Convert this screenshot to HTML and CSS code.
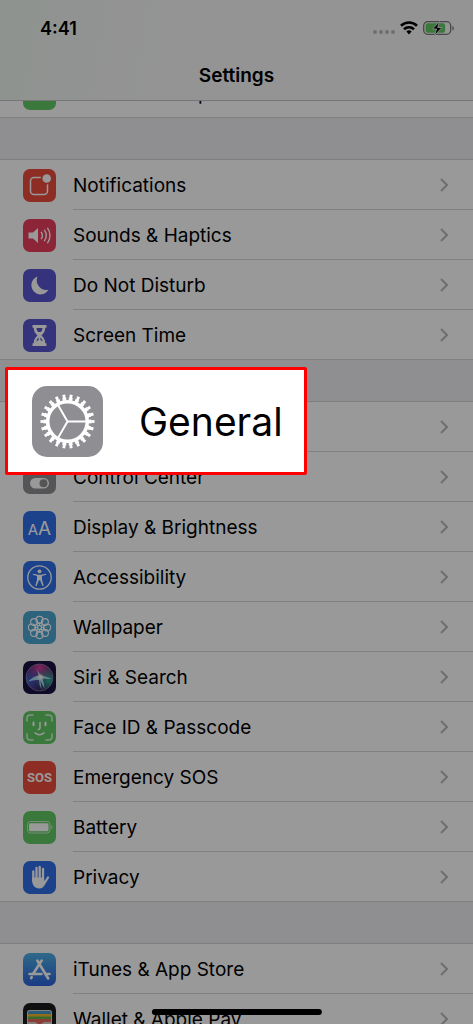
FILE: index.html
```html
<!DOCTYPE html>
<html lang="en">

<head>
    <meta charset="utf-8">
    <meta name="viewport" content="width=device-width, initial-scale=1">
    <title>Settings</title>
    <link rel="stylesheet" href="styles.css">
</head>

<body>
    <div class="screen">
        <header class="header">
            <div class="status">
                <span class="time">4:41</span>
                <div class="indicators">
                    <svg class="dots" width="22" height="16" viewBox="0 0 22 16">
                        <circle cx="2" cy="12" r="2" />
                        <circle cx="8" cy="12" r="2" />
                        <circle cx="14" cy="12" r="2" />
                        <circle cx="20" cy="12" r="2" />
                    </svg>
                    <svg width="18" height="16" viewBox="0 0 18 16" fill="none" stroke="#000" stroke-width="2.6">
                        <path d="M1 5.800a11.400 11.400 0 0 1 16 0" />
                        <path d="M4 9.200a7.200 7.200 0 0 1 10 0" />
                        <path d="M6.400 11.600a3.700 3.700 0 0 1 5.200 0L9 14.400z" fill="#000" stroke="none" />
                    </svg>
                    <svg width="31" height="16" viewBox="0 0 31 16">
                        <rect x="0.700" y="1.700" width="27" height="12.600" rx="4" fill="none" stroke="#777" stroke-width="1.300" />
                        <path d="M29.500 6v4.500c1.600-.6 1.600-3.900 0-4.500z" fill="#666" />
                        <rect class="green" x="2.600" y="3.200" width="19.500" height="9.600" rx="2" />
                        <path d="M16.500 1.500L9.500 9h4l-2 6.500 7.500-8h-4.300z" fill="#000" stroke="#ddd" stroke-width="1" />
                    </svg>
                </div>
            </div>
            <h1>Settings</h1>
        </header>

        <main class="settings">
            <nav class="group group-scrolled">
                <a class="row" href="#">
                    <svg class="icon" viewBox="0 0 33 33">
                        <rect class="green" width="33" height="33" rx="7" />
                        <g fill="none" stroke="#fff" stroke-width="2">
                            <circle cx="12" cy="16.500" r="6" />
                            <circle cx="21" cy="16.500" r="6" />
                        </g>
                    </svg>
                    <span class="label">Personal Hotspot</span>
                </a>
            </nav>

            <nav class="group">
                <a class="row" href="#">
                    <svg class="icon" viewBox="0 0 33 33">
                        <rect class="red" width="33" height="33" rx="7" />
                        <rect x="7.500" y="8.500" width="17" height="17" rx="3.500" fill="none" stroke="#fff" stroke-width="1.500" />
                        <circle class="red" cx="23.700" cy="9.500" r="6" />
                        <circle cx="23.700" cy="9.500" r="4.300" fill="#fff" />
                    </svg>
                    <span class="label">Notifications</span>
                    <svg class="chevron" viewBox="0 0 9 14"><path d="M1 1l6 6-6 6" /></svg>
                </a>
                <a class="row" href="#">
                    <svg class="icon" viewBox="0 0 33 33">
                        <rect class="pink" width="33" height="33" rx="7" />
                        <path d="M5.500 13.500h4.500L15 9v15l-5-4.500H5.500z" fill="#fff" />
                        <g fill="none" stroke="#fff" stroke-width="1.400" stroke-linecap="round">
                            <path d="M18.300 13.300a5.500 5.500 0 0 1 0 6.400" />
                            <path d="M21.400 11.200a9 9 0 0 1 0 10.600" />
                            <path d="M24.600 9.200a12.500 12.500 0 0 1 0 14.600" />
                        </g>
                    </svg>
                    <span class="label">Sounds &amp; Haptics</span>
                    <svg class="chevron" viewBox="0 0 9 14"><path d="M1 1l6 6-6 6" /></svg>
                </a>
                <a class="row" href="#">
                    <svg class="icon" viewBox="0 0 33 33">
                        <rect class="purple" width="33" height="33" rx="7" />
                        <path d="M14.500 7.500a9.200 9.200 0 1 0 11 13.300A9.800 9.800 0 0 1 14.500 7.500z" fill="#fff" />
                    </svg>
                    <span class="label">Do Not Disturb</span>
                    <svg class="chevron" viewBox="0 0 9 14"><path d="M1 1l6 6-6 6" /></svg>
                </a>
                <a class="row" href="#">
                    <svg class="icon" viewBox="0 0 33 33">
                        <rect class="purple" width="33" height="33" rx="7" />
                        <path d="M9.500 6h14v2.800h-1.300c0 4-1.700 5.500-3.700 7.700 2 2.200 3.700 3.700 3.700 7.700h1.300V27h-14v-2.800h1.300c0-4 1.700-5.500 3.700-7.700-2-2.200-3.700-3.700-3.700-7.700H9.500z" fill="#fff" />
                        <path class="purple" d="M13.500 9h6c0 2-.7 3-1.800 4h-2.400c-1.100-1-1.800-2-1.800-4zM15.600 18.500q-2 1.500-2.300 4l2.300-1.500zM17.400 18.500q2 1.500 2.300 4L17.400 21z" />
                    </svg>
                    <span class="label">Screen Time</span>
                    <svg class="chevron" viewBox="0 0 9 14"><path d="M1 1l6 6-6 6" /></svg>
                </a>
            </nav>

            <nav class="group">
                <a class="row" href="#">
                    <svg class="icon" viewBox="0 0 71 71"><use href="#gear" /></svg>
                    <span class="label">General</span>
                    <svg class="chevron" viewBox="0 0 9 14"><path d="M1 1l6 6-6 6" /></svg>
                </a>
                <a class="row" href="#">
                    <svg class="icon" viewBox="0 0 33 33">
                        <rect class="gray" width="33" height="33" rx="7" />
                        <rect x="7.500" y="5" width="18" height="8" rx="4" fill="none" stroke="#fff" stroke-width="1.500" />
                        <circle cx="11.500" cy="9" r="3" fill="#fff" />
                        <rect x="7" y="17" width="19" height="10.500" rx="5.250" fill="#fff" />
                        <circle class="gray" cx="20.500" cy="22.200" r="4" />
                    </svg>
                    <span class="label">Control Center</span>
                    <svg class="chevron" viewBox="0 0 9 14"><path d="M1 1l6 6-6 6" /></svg>
                </a>
                <a class="row" href="#">
                    <svg class="icon" viewBox="0 0 33 33">
                        <rect class="blue" width="33" height="33" rx="7" />
                        <text class="letter" x="10" y="24" font-size="15">A</text>
                        <text class="letter" x="21.500" y="24" font-size="19">A</text>
                    </svg>
                    <span class="label">Display &amp; Brightness</span>
                    <svg class="chevron" viewBox="0 0 9 14"><path d="M1 1l6 6-6 6" /></svg>
                </a>
                <a class="row" href="#">
                    <svg class="icon" viewBox="0 0 33 33">
                        <rect class="blue" width="33" height="33" rx="7" />
                        <circle cx="16.500" cy="16.500" r="11.700" fill="none" stroke="#fff" stroke-width="1.300" />
                        <circle cx="16.500" cy="10.300" r="1.900" fill="#fff" />
                        <path d="M10 12.700l5 1h3l5-1 .2 1.100-4.200 1.300v3.600l1.700 6-1.300.4-2.300-5.900h-1.200l-2.300 5.900-1.300-.4 1.700-6v-3.600l-4.200-1.300z" fill="#fff" />
                    </svg>
                    <span class="label">Accessibility</span>
                    <svg class="chevron" viewBox="0 0 9 14"><path d="M1 1l6 6-6 6" /></svg>
                </a>
                <a class="row" href="#">
                    <svg class="icon" viewBox="0 0 33 33">
                        <rect class="sky" width="33" height="33" rx="7" />
                        <g fill="none" stroke="#fff" stroke-width="1.100">
                            <circle cx="16.500" cy="8.900" r="3.500" />
                            <circle cx="21.900" cy="11.100" r="3.500" />
                            <circle cx="24.100" cy="16.500" r="3.500" />
                            <circle cx="21.900" cy="21.900" r="3.500" />
                            <circle cx="16.500" cy="24.100" r="3.500" />
                            <circle cx="11.100" cy="21.900" r="3.500" />
                            <circle cx="8.900" cy="16.500" r="3.500" />
                            <circle cx="11.100" cy="11.100" r="3.500" />
                            <circle cx="16.500" cy="16.500" r="4.600" />
                            <circle cx="16.500" cy="16.500" r="2" />
                            <path d="M16.500 12v3M16.500 18v3M12 16.500h3M18 16.500h3M13.300 13.300l2 2M17.700 17.700l2 2M19.700 13.300l-2 2M15.300 17.700l-2 2" />
                        </g>
                    </svg>
                    <span class="label">Wallpaper</span>
                    <svg class="chevron" viewBox="0 0 9 14"><path d="M1 1l6 6-6 6" /></svg>
                </a>
                <a class="row" href="#">
                    <svg class="icon" viewBox="0 0 33 33">
                        <defs>
                            <radialGradient id="siri-pink" cx=".5" cy=".15" r=".6">
                                <stop offset="0" stop-color="#d0409c" />
                                <stop offset="1" stop-color="#d0409c" stop-opacity="0" />
                            </radialGradient>
                            <radialGradient id="siri-blue" cx=".1" cy=".6" r=".55">
                                <stop offset="0" stop-color="#4560c8" />
                                <stop offset="1" stop-color="#4560c8" stop-opacity="0" />
                            </radialGradient>
                            <radialGradient id="siri-teal" cx=".85" cy=".6" r=".5">
                                <stop offset="0" stop-color="#2fa898" />
                                <stop offset="1" stop-color="#2fa898" stop-opacity="0" />
                            </radialGradient>
                            <radialGradient id="siri-glow">
                                <stop offset="0" stop-color="#fff" />
                                <stop offset="1" stop-color="#fff" stop-opacity="0" />
                            </radialGradient>
                        </defs>
                        <rect width="33" height="33" rx="7" fill="#1a1240" />
                        <circle cx="16.500" cy="16.500" r="13.500" fill="#3a1d58" />
                        <circle cx="16.500" cy="16.500" r="13.500" fill="url(#siri-pink)" />
                        <circle cx="16.500" cy="16.500" r="13.500" fill="url(#siri-blue)" />
                        <circle cx="16.500" cy="16.500" r="13.500" fill="url(#siri-teal)" stroke="#8c86a8" stroke-width=".7" />
                        <path d="M5 20.500Q12 14 16 14.500L13.500 8l4.500 6.500Q23 15 29 18q-6-.5-9.500-.5 1.500 4 2 10-2.500-4-4-8l1 9q-2.500-4-2.500-9.500Q11 18.500 5 20.500z" fill="#b4ecf2" opacity=".85" />
                        <circle cx="17.500" cy="16" r="4" fill="url(#siri-glow)" />
                    </svg>
                    <span class="label">Siri &amp; Search</span>
                    <svg class="chevron" viewBox="0 0 9 14"><path d="M1 1l6 6-6 6" /></svg>
                </a>
                <a class="row" href="#">
                    <svg class="icon" viewBox="0 0 33 33">
                        <rect class="green" width="33" height="33" rx="7" />
                        <g fill="none" stroke="#fff" stroke-width="1.500" stroke-linecap="round">
                            <path d="M4 10V7.500Q4 4 7.500 4H10M23 4h2.500Q29 4 29 7.500V10M29 23v2.500q0 3.500-3.500 3.500H23M10 29H7.500Q4 29 4 25.500V23" opacity=".8" />
                            <path d="M10.500 11.500v2.800M22.500 11.500v2.800" stroke-width="2" />
                            <path d="M17 11.500v5.500q0 1.500-1.800 1.500M12 21.800q4.500 4 9 0" />
                        </g>
                    </svg>
                    <span class="label">Face ID &amp; Passcode</span>
                    <svg class="chevron" viewBox="0 0 9 14"><path d="M1 1l6 6-6 6" /></svg>
                </a>
                <a class="row" href="#">
                    <svg class="icon" viewBox="0 0 33 33">
                        <rect class="red" width="33" height="33" rx="7" />
                        <text class="sos" x="16.500" y="21">SOS</text>
                    </svg>
                    <span class="label">Emergency SOS</span>
                    <svg class="chevron" viewBox="0 0 9 14"><path d="M1 1l6 6-6 6" /></svg>
                </a>
                <a class="row" href="#">
                    <svg class="icon" viewBox="0 0 33 33">
                        <rect class="green" width="33" height="33" rx="7" />
                        <rect x="4.500" y="10.500" width="22.500" height="11.500" rx="3" fill="none" stroke="#fff" stroke-width="1" opacity=".65" />
                        <rect x="6" y="12.300" width="19.500" height="8" rx="1.500" fill="#fff" />
                        <path d="M28.500 14.300v4c1.500-.5 1.500-3.500 0-4z" fill="#fff" opacity=".7" />
                    </svg>
                    <span class="label">Battery</span>
                    <svg class="chevron" viewBox="0 0 9 14"><path d="M1 1l6 6-6 6" /></svg>
                </a>
                <a class="row" href="#">
                    <svg class="icon" viewBox="0 0 33 33">
                        <rect class="blue" width="33" height="33" rx="7" />
                        <g fill="none" stroke="#fff" stroke-width="2.300" stroke-linecap="round">
                            <path d="M10.300 10.500V20M13.500 6.800V18M16.700 6V18M20 8V18" />
                            <path d="M25 16.500L21 23" />
                        </g>
                        <path d="M9.150 16.500h12v3l1.700.3c-.8 2.800-1.600 7.700-6.400 7.700-5.200 0-7.300-4.200-7.300-8z" fill="#fff" />
                    </svg>
                    <span class="label">Privacy</span>
                    <svg class="chevron" viewBox="0 0 9 14"><path d="M1 1l6 6-6 6" /></svg>
                </a>
            </nav>

            <nav class="group">
                <a class="row" href="#">
                    <svg class="icon" viewBox="0 0 33 33">
                        <defs>
                            <linearGradient id="store" x2="0" y2="1">
                                <stop offset="0" stop-color="#4fb0e4" />
                                <stop offset="1" stop-color="#2b62dc" />
                            </linearGradient>
                        </defs>
                        <rect width="33" height="33" rx="7" fill="url(#store)" />
                        <g fill="none" stroke="#fff" stroke-width="2.600" stroke-linecap="round">
                            <path d="M14.300 7.500l10.900 18M18.700 7.500L10 21M8.700 24.200l-.5 1" />
                            <path d="M6.500 21h12M22.500 21h4" />
                        </g>
                    </svg>
                    <span class="label">iTunes &amp; App Store</span>
                    <svg class="chevron" viewBox="0 0 9 14"><path d="M1 1l6 6-6 6" /></svg>
                </a>
                <a class="row" href="#">
                    <svg class="icon" viewBox="0 0 33 33">
                        <rect width="33" height="33" rx="7" fill="#1c1c1e" />
                        <rect x="4" y="7" width="25" height="22" rx="2.500" fill="#d8d5cc" />
                        <path d="M5 11V9.500Q5 8 6.500 8h20Q28 8 28 9.500V11z" fill="#4399c8" />
                        <path d="M5 11h23v3H5z" fill="#f2b62e" />
                        <path d="M5 13.500h23v3H5z" fill="#62b34c" />
                        <path d="M5 16h23v3h-6.500q-1.500 0-2 1-3 2.700-6 0-.5-1-2-1H5z" fill="#e8685c" />
                    </svg>
                    <span class="label">Wallet &amp; Apple Pay</span>
                    <svg class="chevron" viewBox="0 0 9 14"><path d="M1 1l6 6-6 6" /></svg>
                </a>
            </nav>
        </main>

        <div class="dim"></div>

        <a class="callout" href="#">
            <svg class="callout-icon" viewBox="0 0 71 71">
                <g id="gear">
                    <rect class="gray" width="71" height="71" rx="15" />
                    <g fill="none" stroke="#fff">
                        <circle cx="35.500" cy="35.500" r="19.800" stroke-width="3.600" />
                        <!-- 22 teeth, wide at the root and narrow at the tip -->
                        <circle cx="35.500" cy="35.500" r="22.500" stroke-width="3" pathLength="220" stroke-dasharray="6 4" stroke-dashoffset="3" />
                        <circle cx="35.500" cy="35.500" r="25.300" stroke-width="3.400" pathLength="220" stroke-dasharray="4 6" stroke-dashoffset="2" />
                        <path d="M35.500 35.500h19M35.500 35.500L26 19M35.500 35.500L26 52" stroke-width="2" />
                    </g>
                </g>
            </svg>
            <span>General</span>
        </a>

        <div class="home-bar"></div>
    </div>
</body>

</html>
```
FILE: styles.css
```css
* {
    box-sizing: border-box;
}

body {
    margin: 0;
    background-color: #efeff4;
    font-family: Inter, "Liberation Sans", sans-serif;
    color: #000;
}

.screen {
    position: relative;
    height: 100vh;
    overflow: hidden;
}

.header {
    height: 101px;
    padding-top: 18px;
    border-bottom: 1px solid #c4c4c8;
    background: linear-gradient(100deg, #eef5f0 0%, #f7f7f7 45%);
}

.status {
    display: flex;
    justify-content: space-between;
    align-items: center;
    height: 20px;
    padding: 0 19px 0 40px;
}

.time {
    font-size: 18px;
    font-weight: 600;
}

.indicators {
    display: flex;
    align-items: center;
    gap: 5px;
}

.dots {
    fill: #bbb;
}

h1 {
    margin: 26px 0 0;
    font-size: 19px;
    line-height: 24px;
    font-weight: 600;
    text-align: center;
}

.settings {
    display: flex;
    flex-direction: column;
    gap: 41px;
}

.group {
    display: flex;
    flex-direction: column;
    border-top: 1px solid #d2d2d7;
    background-color: #fff;
}

/* last row of the list that has scrolled under the header */
.group-scrolled {
    height: 17px;
    justify-content: flex-end;
    border-top: none;
    overflow: hidden;
}

.row {
    display: flex;
    flex: none;
    align-items: center;
    height: 50px;
    padding: 0 24px 0 23px;
    color: inherit;
    text-decoration: none;
    background: linear-gradient(#d6d6da, #d6d6da) 73px 100% / 100% 1px no-repeat;
}

.row:last-child {
    background-position: 0 100%;
}

.icon {
    width: 33px;
    height: 33px;
    margin-right: 17px;
}

.label {
    flex: 1;
    font-size: 19px;
}

.chevron {
    width: 9px;
    height: 14px;
    fill: none;
    stroke: #b8b8bd;
    stroke-width: 2;
}

.red {
    fill: #eb4b3b;
}

.pink {
    fill: #e83e5c;
}

.purple {
    fill: #5856cf;
}

.green {
    fill: #62c964;
}

.blue {
    fill: #2f6fea;
}

.sky {
    fill: #4ea6d2;
}

.gray {
    fill: #8e8e93;
}

.letter {
    fill: #fff;
    text-anchor: middle;
}

.sos {
    fill: #fff;
    font-family: Roboto, "Liberation Sans", sans-serif;
    font-size: 13px;
    font-weight: 700;
    text-anchor: middle;
}

.dim {
    position: absolute;
    inset: 0;
    background-color: rgba(0, 0, 0, 0.4);
    pointer-events: none;
}

.callout {
    position: absolute;
    top: 367px;
    left: 5px;
    display: flex;
    align-items: center;
    gap: 36px;
    height: 108px;
    padding: 0 21px 0 24px;
    border: 3px solid #f00;
    border-radius: 2px;
    background-color: #fff;
    color: #000;
    font-size: 39px;
    text-decoration: none;
}

.callout-icon {
    width: 71px;
    height: 71px;
}

.home-bar {
    position: absolute;
    bottom: 9px;
    left: 50%;
    width: 36%;
    height: 6px;
    border-radius: 3px;
    background-color: #000;
    transform: translateX(-50%);
}
```
